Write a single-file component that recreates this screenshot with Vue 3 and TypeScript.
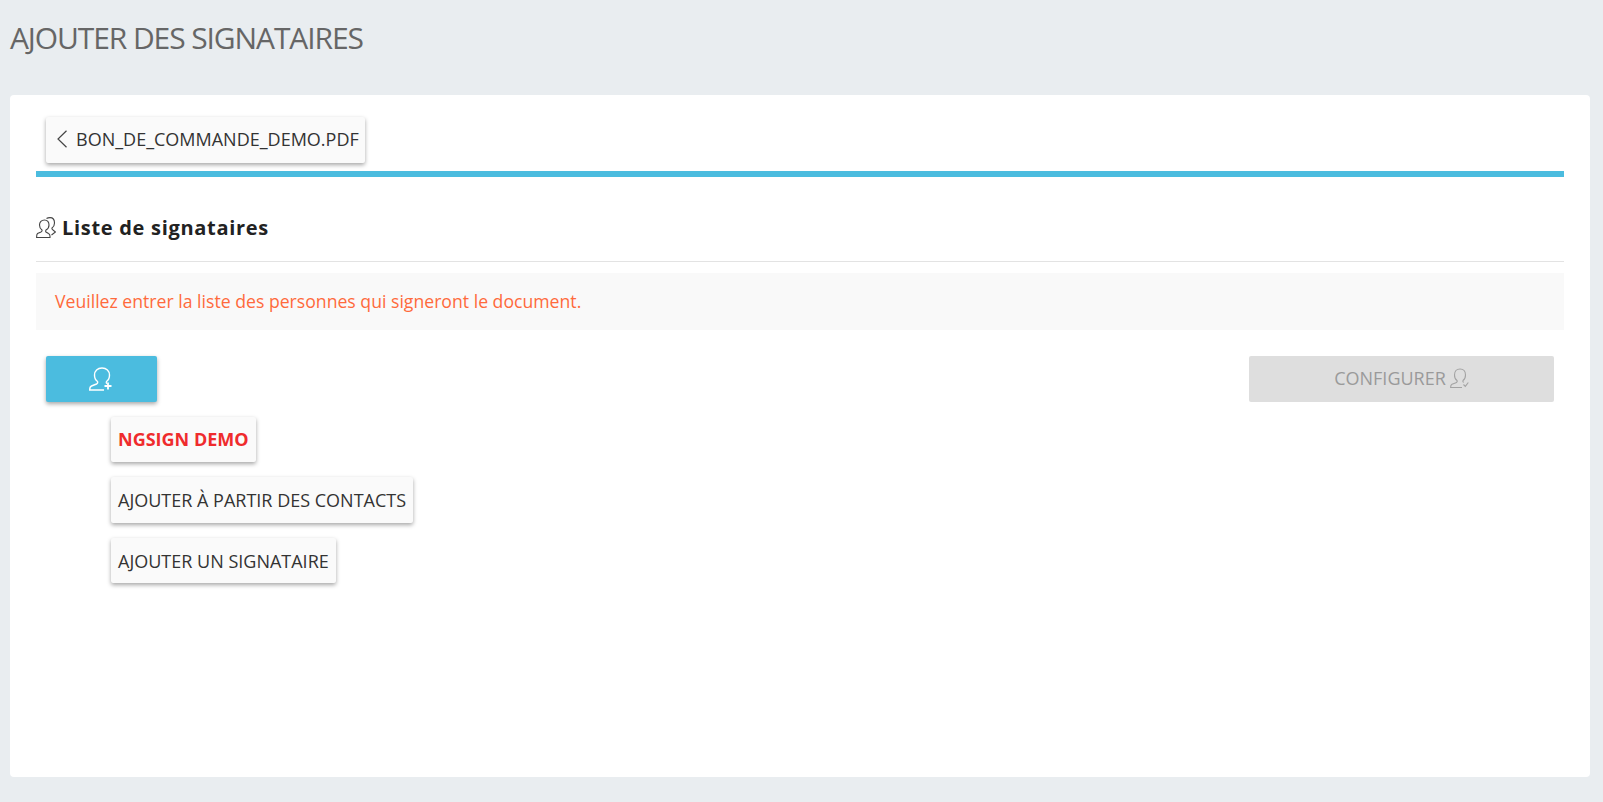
<script setup lang="ts">
const people: { label: string; strong?: boolean }[] = [
  { label: 'NGSIGN DEMO', strong: true },
  { label: 'AJOUTER À PARTIR DES CONTACTS' },
  { label: 'AJOUTER UN SIGNATAIRE' },
]
</script>

<template>
  <div class="page">
    <h1 class="title">AJOUTER DES SIGNATAIRES</h1>
    <main class="card">
      <div class="tabs">
        <button class="btn back">
          <svg class="chev" width="12" height="18" viewBox="0 0 12 18" fill="none" stroke="#444" stroke-width="1.2"><path d="M10.5 .7 2 9l8.500 8.300" /></svg>
          BON_DE_COMMANDE_DEMO.PDF
        </button>
      </div>
      <div class="bar"></div>
      <h2 class="heading">
        <svg width="20" height="21" viewBox="0 0 20 21" fill="none" stroke="#444" stroke-width="1.1">
          <path d="M8.500 3C5.500 3 3.500 5 3.500 8c0 2.500 1 4 2.500 5 .3 1 0 1.500-1 2l-3.500 1.500c-.7.500-.9 1.500-.9 4H14V19c0-1.500-.5-2-1.500-2.500L10 15c-.5-.5-.5-1 0-2 2-1 3-2.500 3-5 0-3-1.500-5-4.500-5z" />
          <path d="M10.500 1.500c1-.7 2.500-.9 3.500-.9 3 0 4.500 2.400 4.500 5.400 0 2.500-1 4-2.500 5-.3 1 0 1.500 1 2l2.500 2-4 3" />
        </svg>
        <span>Liste de signataires</span>
      </h2>
      <div class="rule"></div>
      <p class="alert">Veuillez entrer la liste des personnes qui signeront le document.</p>
      <div class="actions">
        <button class="btn add" aria-label="Ajouter">
          <svg width="25" height="24" viewBox="0 0 25 24" fill="none" stroke="#fff" stroke-width="1.4">
            <path d="M13 1C8.500 1 5.500 4 5.500 8c0 3 1.500 5.500 3 6.500.5 1 0 2-1 2.500l-5 2c-1.500.6-1.800 1.500-1.800 4H15" />
            <path d="M13 1c4.500 0 7.500 3 7.500 7 0 3-1.500 5.500-3 6.500-.5 1-.5 1.500.5 2" />
            <path d="M19 15.500v7M15.500 19h7" stroke-width="1.800" />
          </svg>
        </button>
        <button class="btn config" disabled>
          CONFIGURER
          <svg width="19" height="20" viewBox="0 0 19 20" fill="none" stroke="#a3a3a3" stroke-width="1.100">
            <path d="M10 1C6.500 1 4.500 3.500 4.500 7c0 2.500 1 4.500 2.500 5.500.5 1 0 1.800-1 2.200l-4 1.600c-1.200.5-1.400 1.200-1.400 3.200H12" />
            <path d="M10 1c3.500 0 5.500 2.500 5.500 6 0 2.500-1 4.500-2.500 5.500-.4 1-.2 1.500.6 2" />
            <path d="m13.500 16.500 1.800 1.800 3-3.800" />
          </svg>
        </button>
      </div>
      <ul class="list">
        <li v-for="p in people" :key="p.label">
          <button class="btn item" :class="{ strong: p.strong }">{{ p.label }}</button>
        </li>
      </ul>
    </main>
  </div>
</template>

<style>
html, body { margin: 0; background: #e9edf0; }
</style>

<style scoped>
.page {
  height: 802px;
  box-sizing: border-box;
  padding: 0 13px 25px 10px;
  display: flex;
  flex-direction: column;
  font-family: "Open Sans", "Liberation Sans", sans-serif;
  overflow: hidden;
}
.title {
  margin: 0;
  height: 95px;
  padding-top: 19px;
  box-sizing: border-box;
  font-size: 30px;
  line-height: 38px;
  font-weight: 400;
  letter-spacing: -1.1px;
  color: #666;
}
.card {
  flex: 1;
  background: #fff;
  border-radius: 4px;
  padding: 22px 26px 0 26px;
}
.tabs { padding-left: 10px; height: 54px; }
.btn {
  font-family: inherit;
  border: 0;
  border-radius: 2px;
  cursor: pointer;
  display: inline-flex;
  align-items: center;
  box-sizing: border-box;
  height: 45.6px;
  padding-bottom: 2px;
  font-size: 18px;
  color: #333;
  background: #fafafa;
  box-shadow: 0 2px 4px rgba(0, 0, 0, .35);
}
.back { width: 319px; padding: 0 0 2px 10px; gap: 8px; white-space: nowrap; }
.bar { height: 6px; background: #4bbcdf; }
.heading {
  margin: 0;
  height: 84px;
  padding-top: 16px;
  box-sizing: border-box;
  display: flex;
  align-items: center;
  gap: 6px;
  font-size: 20px;
  font-weight: 700;
  letter-spacing: .7px;
  color: #222;
}
.rule { height: 1px; background: #e3e3e3; }
.alert {
  margin: 11px 0 0;
  height: 57px;
  padding: 0 0 2px 19px;
  box-sizing: border-box;
  display: flex;
  align-items: center;
  background: #f9f9f9;
  color: #ff6a3c;
  font-size: 17.65px;
}
.actions {
  margin-top: 26px;
  padding: 0 10px;
  display: flex;
  justify-content: space-between;
}
.add {
  width: 111px;
  padding: 0;
  justify-content: center;
  background: #4bbcdf;
}
.config {
  width: 305px;
  justify-content: center;
  gap: 4px;
  background: #dedede;
  color: #9a9a9a;
  box-shadow: none;
  cursor: default;
}
.list {
  list-style: none;
  margin: 15px 0 0;
  padding: 0 0 0 75px;
  display: flex;
  flex-direction: column;
  gap: 15px;
}
.list li { display: flex; }
.item { padding: 0 7px; white-space: nowrap; }
.strong { font-weight: 700; color: #ef2b2d; }
</style>
